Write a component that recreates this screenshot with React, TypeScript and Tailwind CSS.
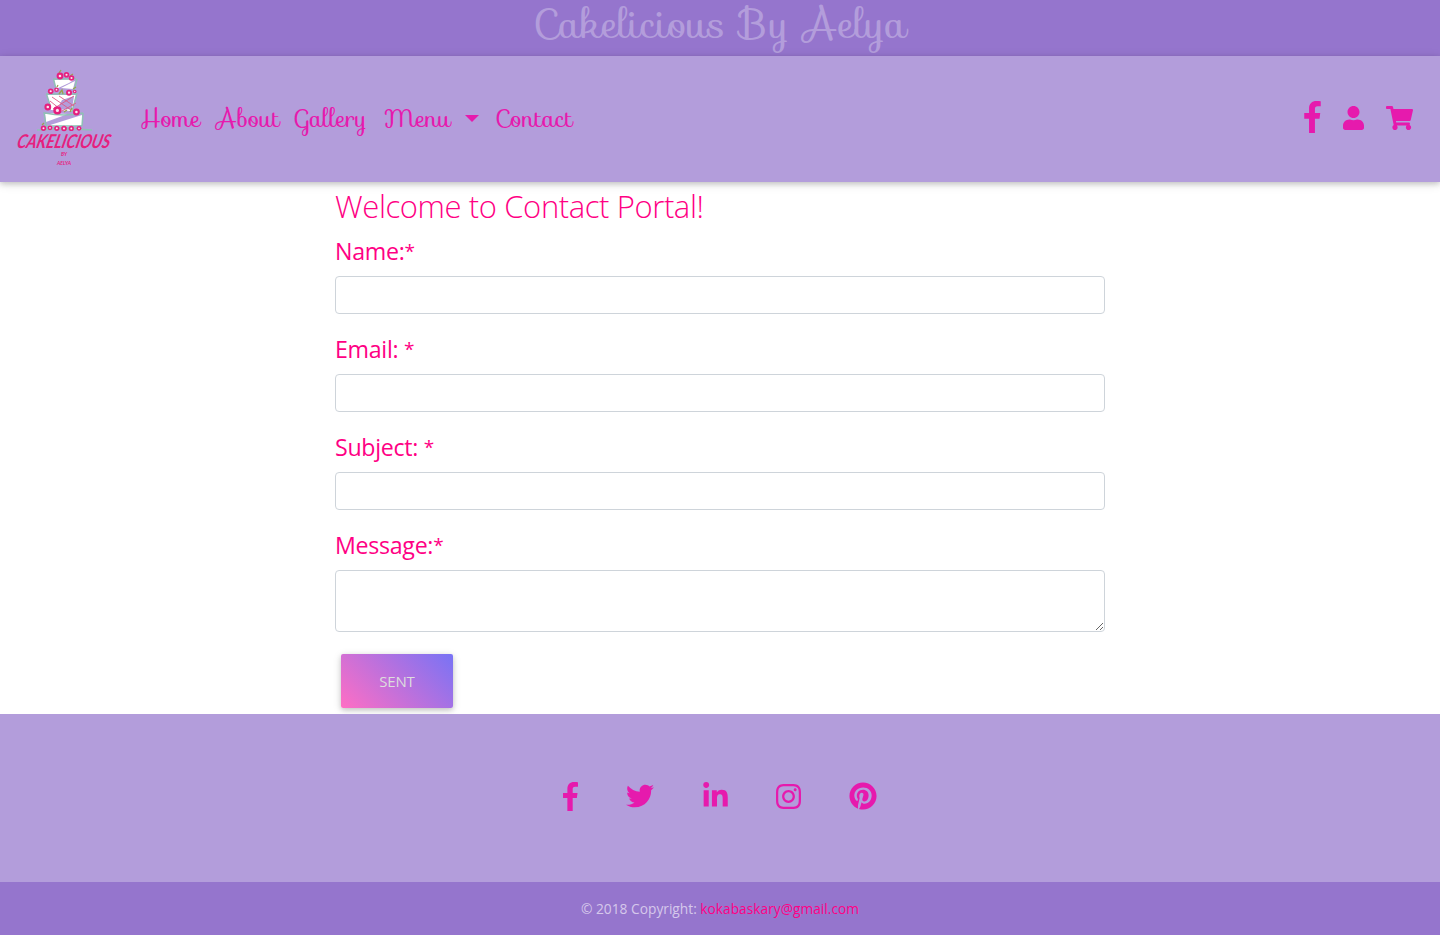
import { FaUser, FaShoppingCart, FaTwitter, FaLinkedinIn, FaInstagram, FaPinterest } from 'react-icons/fa';

const script = 'font-[Sofia,cursive]';

function FacebookF({ className }: { className: string }) {
  return (
    <svg viewBox="0 0 264 512" fill="currentColor" className={className}>
      <path d="M76.7 512V283H0v-91h76.7v-71.7C76.7 42.4 124.3 0 193.8 0c33.3 0 61.9 2.5 70.2 3.6V85h-48.2c-37.8 0-45.1 18-45.1 44.3V192H256l-11.7 91h-73.6v229" />
    </svg>
  );
}

function Rose({ x, y, r }: { x: number; y: number; r: number }) {
  return (
    <g>
      <circle cx={x} cy={y} r={r} fill="#e6207e" />
      <circle cx={x} cy={y} r={r * 0.38} fill="#fbe3f0" />
    </g>
  );
}

const roses: [number, number, number][] = [
  [44, 7, 3.4], [50.5, 5.8, 2.8], [55.5, 9, 2.8],
  [34.7, 22.3, 2.8], [40.5, 20.7, 2.3], [53, 23.7, 3], [58.7, 22.5, 1.8],
  [31.8, 38, 3.4], [41.4, 41.4, 4.1], [60.4, 43, 3.4],
  [27.5, 59.2, 2.7], [34, 58.8, 2.4], [40.8, 59.3, 2.6], [48, 59.5, 2.8], [55.3, 59.4, 2.6], [63, 59.3, 2.4],
];

function Logo() {
  return (
    <svg viewBox="0 0 98 100" fill="none" className="h-[100px] w-[98px] overflow-visible">
      <path d="M38 11L59 10L53 14L40 20Z" fill="#fff" />
      <path d="M45 19L59 12L57 20Z" fill="#fff" />
      <path d="M31 26L60 26L56 42L35 41Z" fill="#fff" />
      <path d="M46 31L58 27L56 40L41 41Z" fill="#b39ddb" />
      <path d="M29 44L52 45L30 53Z" fill="#fff" />
      <path d="M31 57L66 46L66 56L50 58Z" fill="#fff" />
      <g stroke="#8fc1b5" strokeWidth="1.5">
        <path d="M37.5 10L40 20M61 10L58 22M37 10H60" />
        <path d="M30.5 25L34 36M61 24L56 43M30 25H60" />
        <path d="M28 43L30 57M67 44L66 57M29 44Q48 48 67 44" />
        <path d="M21 61Q50 59 76 61M28 57H66" />
      </g>
      <path d="M36 28L55 41M43 27L58 37M37 40L58 27M46 42L60 34M34 32L44 40" stroke="#dc5b86" strokeWidth=".9" />
      <path d="M43 4l2-3M57 5l-3 2M41 18l1-2M57 20l3-2M43 25l3-4l1 4M54 43l2-4M26 56l2-2M48 43l3-2" stroke="#9aa34e" strokeWidth="1.3" />
      {roses.map(([x, y, r]) => <Rose key={`${x}-${y}`} x={x} y={y} r={r} />)}
      <g fill="#e6207e" fontFamily="Lato, sans-serif" fontWeight="700" fontStyle="italic">
        <text transform="translate(0 78.7) skewX(-14)" fontSize="19" textLength="93" lengthAdjust="spacingAndGlyphs">CAKELICIOUS</text>
        <text x="45" y="87" fontSize="6" textLength="6" lengthAdjust="spacingAndGlyphs">BY</text>
        <text x="41" y="96" fontSize="6" textLength="14" lengthAdjust="spacingAndGlyphs">AELYA</text>
      </g>
    </svg>
  );
}

function Label({ children }: { children: string }) {
  return (
    <label className="mb-2.5 block pt-2.5 text-[23.2px] leading-[30px] tracking-[-0.3px]">
      {children}
      <span className="relative -top-0.5 inline-block text-[19px] leading-none">*</span>
    </label>
  );
}

const fields = ['Name:', 'Email: ', 'Subject: '];

export default function App() {
  return (
    <div className="flex h-[935px] flex-col bg-white font-['Open_Sans',sans-serif]">
      <header className="h-14 bg-[#9575cd] text-center">
        <h1 className={`${script} text-[40px] leading-[48px] text-[#b39ddb]`}>Cakelicious By Aelya</h1>
      </header>
      <nav className="relative flex h-[126px] items-center bg-[#b39ddb] pr-[27px] pl-4 text-[#e61aad] shadow-[0_2px_5px_rgba(0,0,0,.16),0_2px_10px_rgba(0,0,0,.12)]">
        <Logo />
        <div className={`${script} ml-[26px] flex items-center text-2xl leading-8 whitespace-nowrap`}>
          <a className="w-[76.5px]">Home</a>
          <a className="w-[79px]">About</a>
          <a className="w-[88.5px]">Gallery</a>
          <a className="w-[81px]">Menu</a>
          <span className="mr-4 mb-0.5 border-x-[7px] border-t-[7px] border-x-transparent border-t-[#e61aad]" />
          <a>Contact</a>
        </div>
        <div className="ml-auto flex items-center pb-[5px]">
          <FacebookF className="mr-[22px] h-8 w-[17px]" />
          <FaUser className="mt-0.5 mr-[22px] h-6 w-[21px]" />
          <FaShoppingCart className="mt-0.5 h-6 w-[27px]" />
        </div>
      </nav>
      <main className="mx-auto h-[532px] w-[770px] text-[#ff0084]">
        <h2 className="pt-1 text-[31px] leading-[40px] font-light tracking-[-0.4px]">Welcome to Contact Portal!</h2>
        {fields.map((label) => (
          <div key={label} className="mb-2.5">
            <Label>{label}</Label>
            <input className="block h-[38px] w-full rounded border border-[#ced4da] px-3" />
          </div>
        ))}
        <Label>Message:</Label>
        <textarea className="block h-[62px] w-full rounded border border-[#ced4da] px-3" />
        <button className="mt-[22px] ml-1.5 block h-[54px] w-28 rounded-[2px] bg-[linear-gradient(45deg,#ff6ec4,#7873f5)] text-[15px] tracking-[-0.2px] text-[#ddd] shadow-[0_2px_5px_rgba(0,0,0,.16),0_2px_10px_rgba(0,0,0,.12)]">SENT</button>
      </main>
      <footer className="relative flex flex-1 flex-col">
        <div className="flex h-[168px] items-center justify-center gap-12 bg-[#b39ddb] pb-1 text-[#e61aad]">
          <FacebookF className="h-[29px] w-[15px]" />
          <FaTwitter className="h-7 w-7" />
          <FaLinkedinIn className="ml-px h-7 w-[25px]" />
          <FaInstagram className="h-[29px] w-[25px]" />
          <FaPinterest className="size-7" />
        </div>
        <div className="h-[53px] bg-[#9575cd] text-center text-[13.75px] leading-[53px] text-[#d5c8eb]">
          © 2018 Copyright: <a className="text-[#ff0084]">kokabaskary@gmail.com</a>
        </div>
      </footer>
    </div>
  );
}
